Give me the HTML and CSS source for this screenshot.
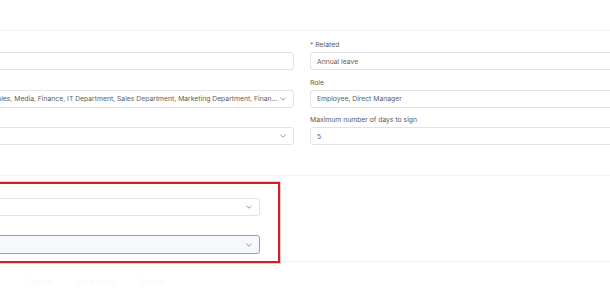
FILE: index.html
```html
<!DOCTYPE html>
<html lang="en">
<head>
    <meta charset="UTF-8">
    <meta name="viewport" content="width=device-width, initial-scale=1.0">
    <title>Approval rule</title>
    <link rel="stylesheet" href="styles.css">
</head>
<body>
    <div class="page">
        <div class="top"></div>

        <div class="section">
            <div class="grid">
                <div class="field">
                    <label>&nbsp;</label>
                    <div class="input"></div>
                </div>
                <div class="field">
                    <label><span class="req">*</span> Related</label>
                    <div class="input">Annual leave</div>
                </div>
                <div class="field">
                    <label>&nbsp;</label>
                    <div class="input select">
                        <span class="value">Sales, Media, Finance, IT Department, Sales Department, Marketing Department, Finance Department</span>
                        <svg class="chev" width="6" height="4" viewBox="0 0 6 4"><polyline points="0.5,0.8 3,3.2 5.5,0.8" /></svg>
                    </div>
                </div>
                <div class="field">
                    <label>Role</label>
                    <div class="input">Employee, Direct Manager</div>
                </div>
                <div class="field">
                    <label>&nbsp;</label>
                    <div class="input select">
                        <span class="value"></span>
                        <svg class="chev" width="6" height="4" viewBox="0 0 6 4"><polyline points="0.5,0.8 3,3.2 5.5,0.8" /></svg>
                    </div>
                </div>
                <div class="field">
                    <label>Maximum number of days to sign</label>
                    <div class="input">5</div>
                </div>
            </div>
        </div>

        <div class="section second">
            <div class="highlight">
                <div class="input select">
                    <span class="value"></span>
                    <svg class="chev" width="6" height="4" viewBox="0 0 6 4"><polyline points="0.5,0.8 3,3.2 5.5,0.8" /></svg>
                </div>
                <div class="input select focus">
                    <span class="value"></span>
                    <svg class="chev" width="6" height="4" viewBox="0 0 6 4"><polyline points="0.5,0.8 3,3.2 5.5,0.8" /></svg>
                </div>
            </div>
        </div>

        <div class="footer">
            <span>Cancel</span>
            <span>Save draft</span>
            <span>Submit</span>
        </div>
    </div>
</body>
</html>
```

FILE: styles.css
```css
* {
    box-sizing: border-box;
}
html, body {
    margin: 0;
    background: #fff;
    overflow: hidden;
}
body {
    font-family: Inter, 'Noto Sans', sans-serif;
    font-size: 6.8px;
    color: #5c5c5c;
}
.page {
    width: 640px;
    margin-left: -14px;
}
.top {
    height: 31px;
    border-bottom: 1px solid #f3f3f4;
}
.section {
    padding: 9px 0 0;
}
.grid {
    display: grid;
    grid-template-columns: 308px 308px;
    column-gap: 16px;
    row-gap: 7.5px;
}
.field {
    label {
        display: block;
        height: 10px;
        line-height: 10px;
        margin-bottom: 2px;
        color: #5a5a5a;
        white-space: nowrap;
    }
}
.req {
    color: #e5484d;
}
.input {
    height: 18px;
    border: 1px solid #e3e3e6;
    border-radius: 3px;
    padding: 0 6px;
    display: flex;
    align-items: center;
    color: #606060;
    background: #fff;
    white-space: nowrap;
}
.select {
    gap: 2px;
    padding-right: 7px;

    .value {
        flex: 1;
        overflow: hidden;
        text-overflow: ellipsis;
    }
    .chev {
        flex: none;
        fill: none;
        stroke: #8a8a8a;
        stroke-width: 0.9;
    }
}
.second {
    margin-top: 30px;
    padding-top: 6px;
    border-top: 1px solid #f3f3f4;
    border-bottom: 1px solid #f0f0f2;
    height: 87px;
}
.highlight {
    width: 300px;
    margin-left: -6px;
    padding: 14px 18px 7px 6px;
    border: 2px solid #cf2029;
    box-shadow: 0 0 0 1px rgba(207, 32, 41, 0.25);
    display: flex;
    flex-direction: column;
    gap: 19px;

    .focus {
        height: 19px;
        border-color: #7ea4d3;
        background: #f5f8fc;
    }
}
.footer {
    display: flex;
    gap: 24px;
    padding: 15px 0 0 40px;
    font-size: 8px;
    color: #f8f9fa;
}
```
